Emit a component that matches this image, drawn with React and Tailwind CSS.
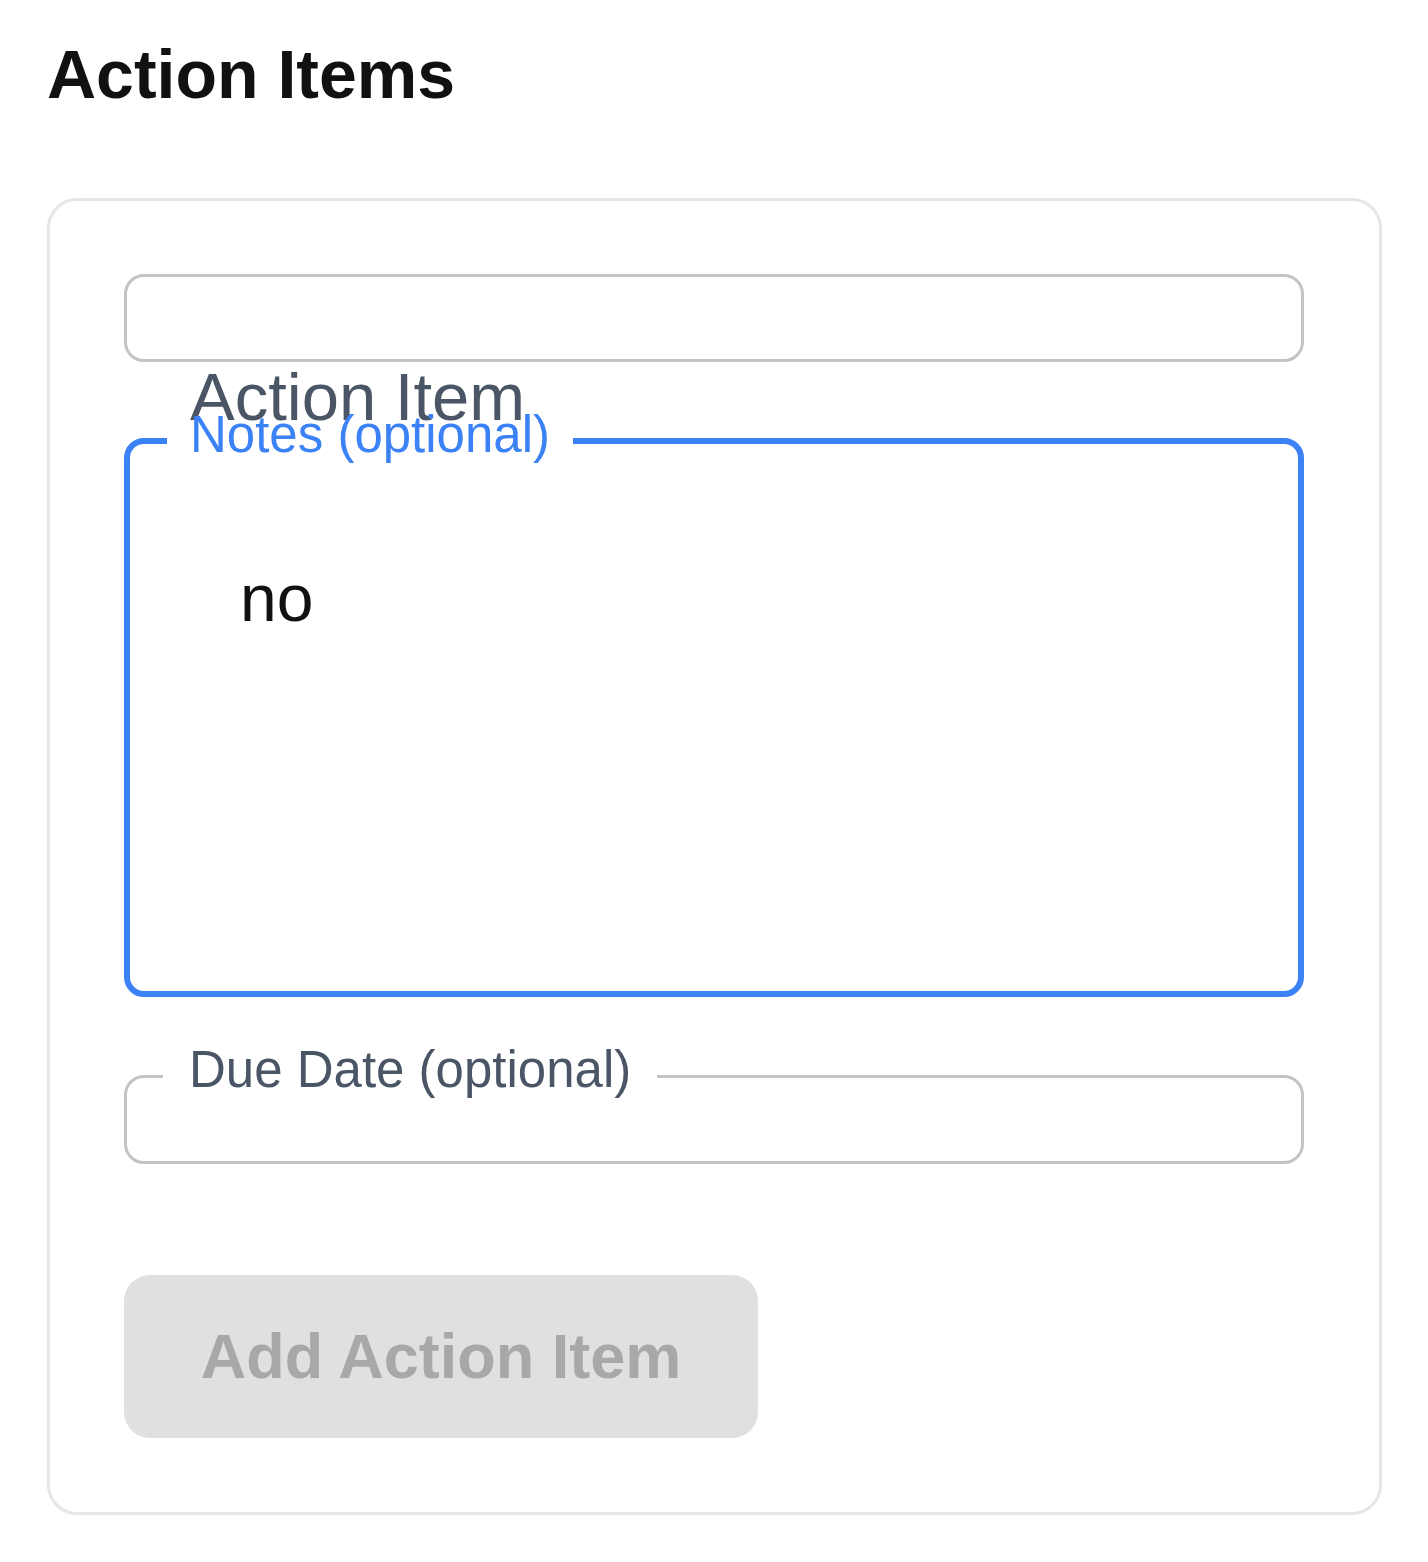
import { useState } from 'react';

function App() {
  const [notes] = useState('no');

  return (
    <div className="min-h-screen bg-white px-[47px] pt-[40px] font-['Liberation_Sans',Arial,sans-serif]">
      <h2 className="text-[68px] font-bold leading-none text-[#111111]">Action Items</h2>

      <div className="mt-[90px] w-[1335px] rounded-[30px] border-[3px] border-[#e6e6e6] pl-[74px] pr-[75px] pt-[73px] pb-[74px]">
        <div className="flex flex-col gap-[47px]">
          {/* title input, its label spills out below */}
          <div className="relative">
            <div className="h-[88px] w-full rounded-[20px] border-[3px] border-[#c4c4c4]" />
            <label className="absolute left-[66px] top-full mt-[1px] text-[67px] leading-none text-[#4a5565] whitespace-nowrap">
              Action Item
            </label>
          </div>

          <fieldset className="relative m-0 h-[588px] min-w-0 rounded-[20px] border-[6px] border-[#3b82f6] p-0">
            <legend className="ml-[37px] px-[23px] pb-[13px] text-[51px] leading-none text-[#3b82f6]">
              Notes (optional)
            </legend>
            <div className="pl-[110px] pt-[92px] text-[66px] leading-none text-[#111111]">{notes}</div>
          </fieldset>

          <fieldset className="relative m-0 h-[120px] min-w-0 rounded-[20px] border-[3px] border-[#c4c4c4] p-0">
            <legend className="ml-[36px] px-[26px] pb-[13px] text-[51px] leading-none text-[#4a5565]">
              Due Date (optional)
            </legend>
          </fieldset>
        </div>

        <button
          type="button"
          disabled
          className="mt-[111px] flex h-[163px] w-[634px] items-center justify-center rounded-[26px] bg-[#e0e0e0] text-[63px] font-bold leading-none text-[#a8a8a8]"
        >
          Add Action Item
        </button>
      </div>
    </div>
  );
}

export default App;
